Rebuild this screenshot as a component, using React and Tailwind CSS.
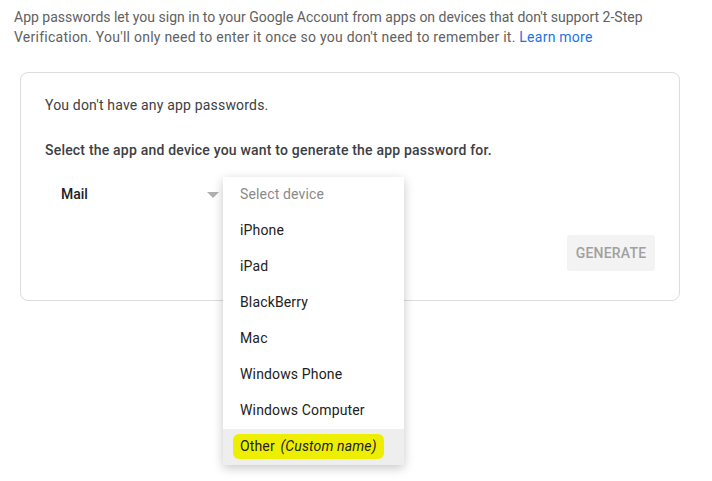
import React from "react";

const devices = ["iPhone", "iPad", "BlackBerry", "Mac", "Windows Phone", "Windows Computer"];

export default function App() {
  return (
    <div className="min-h-screen w-[712px] bg-white font-['Roboto',sans-serif] text-[14px]">
      {/* Intro */}
      <p className="pl-[14px] pr-4 pt-[7px] leading-[20px] text-[#616161]">
        <span>App passwords let you sign in to your Google Account from apps on devices that don't support 2-Step</span>
        <br />
        <span className="tracking-[0.25px]">
          Verification. You'll only need to enter it once so you don't need to remember it.{" "}
          <a className="text-[#1a73e8]">Learn more</a>
        </span>
      </p>

      {/* Card */}
      <div className="relative mx-[20px] mt-[25px] w-[660px] rounded-lg border border-[#dadce0] px-6 pt-[22px] pb-[29px]">
        <p className="leading-[20px] tracking-[0.18px] text-[#3c4043]">You don't have any app passwords.</p>
        <p className="mt-[25px] leading-[20px] font-medium tracking-[0.2px] text-[#3c4043]">
          Select the app and device you want to generate the app password for.
        </p>

        <div className="mt-[16px] flex h-[36px] items-center">
          <div className="flex w-[174px] items-center justify-between pl-4">
            <span className="font-medium text-[#202124]">Mail</span>
            <svg width="12" height="6" viewBox="0 0 12 6" className="mt-[2px]">
              <path d="M0 0h12L6 6z" fill="#b0b0b0" />
            </svg>
          </div>
        </div>

        <div className="mt-[23px] flex justify-end">
          <button className="h-[36px] w-[88px] rounded-[3px] bg-[#f3f3f3] font-medium tracking-[0.2px] text-[#a0a0a0]">
            GENERATE
          </button>
        </div>

        {/* Device dropdown */}
        <div className="absolute left-[202px] top-[104px] w-[181px] bg-white shadow-[0_3px_10px_rgba(0,0,0,0.22)]">
          <div className="flex h-[36px] items-center pb-[2px] pl-[17px] tracking-[0.15px] text-[#8a8a8a]">Select device</div>
          {devices.map((d) => (
            <div key={d} className="flex h-[36px] items-center pb-[2px] pl-[17px] tracking-[0.15px] text-[#212121]">
              {d}
            </div>
          ))}
          <div className="flex h-[36px] items-center bg-[#eeeeee] pb-[2px] pl-[10px] tracking-[0.15px] text-[#212121]">
            <span className="rounded-[6px] bg-[#eeee00] px-[7px] py-[2px]">
              Other <em className="ml-[2px]">(Custom name)</em>
            </span>
          </div>
        </div>
      </div>
    </div>
  );
}
